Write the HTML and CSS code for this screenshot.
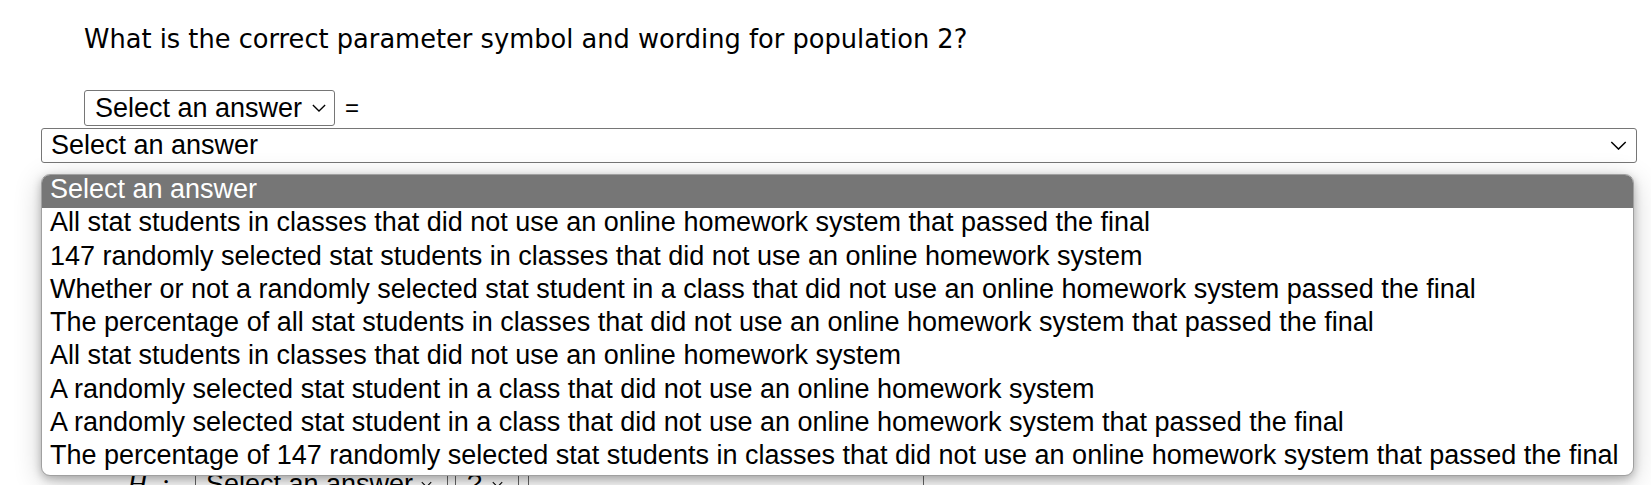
FILE: index.html
```html
<!DOCTYPE html>
<html lang="en">
<head>
<meta charset="utf-8">
<title>Population 2 parameter</title>
<link rel="stylesheet" href="styles.css">
</head>
<body>
<div class="page">
  <p class="question">What is the correct parameter symbol and wording for population 2?</p>
  <div class="symbol-row">
    <div class="sel sel-small"><span>Select an answer</span><svg class="chev-s" viewBox="0 0 16 9" width="14" height="8"><path d="M1 1 L8 8 L15 1" fill="none" stroke="#000" stroke-width="1.5"/></svg></div>
    <span class="eq">=</span>
  </div>
  <div class="sel sel-big"><span>Select an answer</span><svg class="chev-b" viewBox="0 0 18 10" width="17" height="9"><path d="M1 1 L9 9 L17 1" fill="none" stroke="#000" stroke-width="1.6"/></svg></div>
  <div class="hidden-area"></div>
  <div class="hyp-row">
    <span class="h-label"><i>H</i><sub>1</sub> :</span>
    <div class="mini mini-wide"><span>Select an answer</span><svg viewBox="0 0 14 8" width="11" height="7"><path d="M1 1 L7 7 L13 1" fill="none" stroke="#000" stroke-width="1.4"/></svg></div>
    <div class="mini mini-q"><span>?</span><svg viewBox="0 0 14 8" width="11" height="7"><path d="M1 1 L7 7 L13 1" fill="none" stroke="#000" stroke-width="1.4"/></svg></div>
    <div class="mini mini-input"></div>
  </div>

  <div class="popup">
    <div class="opt opt-active">Select an answer</div>
    <div class="opt">All stat students in classes that did not use an online homework system that passed the final</div>
    <div class="opt">147 randomly selected stat students in classes that did not use an online homework system</div>
    <div class="opt">Whether or not a randomly selected stat student in a class that did not use an online homework system passed the final</div>
    <div class="opt">The percentage of all stat students in classes that did not use an online homework system that passed the final</div>
    <div class="opt">All stat students in classes that did not use an online homework system</div>
    <div class="opt">A randomly selected stat student in a class that did not use an online homework system</div>
    <div class="opt">A randomly selected stat student in a class that did not use an online homework system that passed the final</div>
    <div class="opt">The percentage of 147 randomly selected stat students in classes that did not use an online homework system that passed the final</div>
  </div>
</div>
</body>
</html>
```

FILE: styles.css
```css
html, body {
  margin: 0;
  padding: 0;
  background: #fff;
}
body {
  width: 1651px;
  height: 485px;
  overflow: hidden;
}
.page {
  position: relative;
  height: 485px;
  overflow: hidden;
  font-family: "Liberation Sans", Arial, sans-serif;
  color: #000;
}
.question {
  margin: 0 0 0 84px;
  padding-top: 23px;
  font-family: "DejaVu Sans", sans-serif;
  font-size: 25.7px;
  line-height: 33px;
  color: #000;
}
.symbol-row {
  display: flex;
  align-items: center;
  margin: 34px 0 0 84px;
  height: 36px;
}
.sel {
  box-sizing: border-box;
  display: flex;
  align-items: center;
  border: 1px solid #767676;
  border-radius: 3px;
  background: #fff;
  font-size: 27px;
  white-space: nowrap;
}
.sel-small {
  width: 251px;
  height: 36px;
  padding-left: 10px;
}
.chev-s {
  margin-left: 10px;
}
.eq {
  margin-left: 10px;
  font-size: 24px;
}
.sel-big {
  margin: 2px 0 0 41px;
  width: 1596px;
  height: 35px;
  padding-left: 9px;
  justify-content: space-between;
  padding-right: 9px;
}
.hidden-area {
  height: 303px;
}
.hyp-row {
  display: flex;
  align-items: stretch;
  height: 36px;
  margin-left: 127px;
}
.h-label {
  font-family: "Liberation Serif", serif;
  font-size: 28px;
  line-height: 36px;
  width: 68px;
}
.h-label sub {
  font-size: 16px;
}
.mini {
  box-sizing: border-box;
  display: flex;
  align-items: center;
  border-left: 1px solid #666;
  border-right: 1px solid #666;
  font-size: 27px;
  white-space: nowrap;
}
.mini-wide {
  width: 253px;
  padding-left: 10px;
  gap: 8px;
}
.mini-q {
  margin-left: 7px;
  width: 64px;
  padding-left: 11px;
  gap: 10px;
}
.mini-input {
  margin-left: 9px;
  width: 396px;
}
.popup {
  position: absolute;
  left: 41px;
  top: 174px;
  width: 1593px;
  box-sizing: border-box;
  border: 1px solid #a0a0a0;
  border-radius: 9px;
  background: #fff;
  overflow: hidden;
  box-shadow: 0 3px 8px rgba(0, 0, 0, 0.25), 0 6px 28px rgba(0, 0, 0, 0.2);
}
.opt {
  font-size: 27px;
  line-height: 28px;
  height: 33.3px;
  box-sizing: border-box;
  padding: 0 0 0 8px;
  white-space: nowrap;
  color: #000;
}
.opt-active {
  background: #767676;
  color: #fff;
}
```
